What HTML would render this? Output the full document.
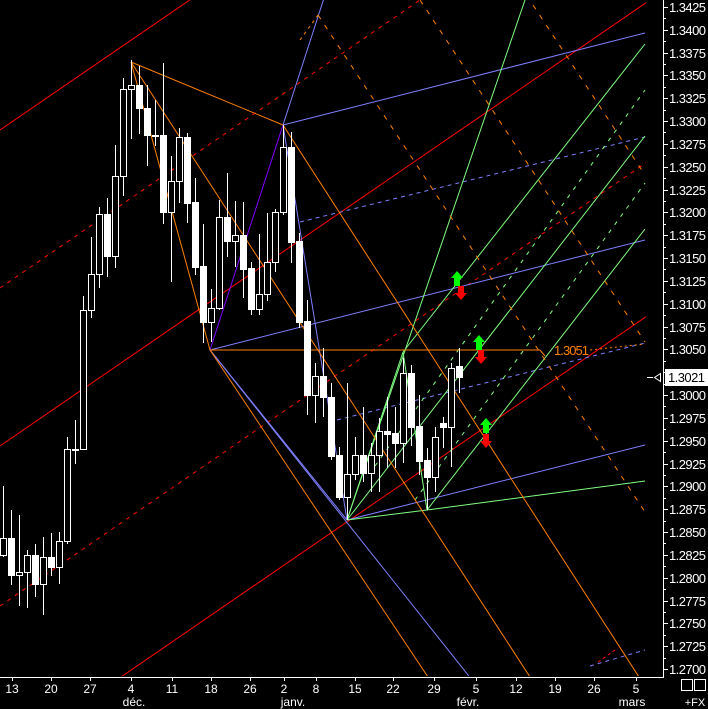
<!DOCTYPE html>
<html><head><meta charset="utf-8"><style>
html,body{margin:0;padding:0;background:#000;width:708px;height:709px;overflow:hidden}
svg{display:block;position:absolute;left:0;top:0}
text{font-family:"Liberation Sans",Arial,sans-serif;fill:#fff}
</style></head><body>
<svg width="708" height="709" viewBox="0 0 708 709" xmlns="http://www.w3.org/2000/svg">
<rect width="708" height="709" fill="#000"/>
<defs><clipPath id="c"><rect x="0" y="0" width="646" height="676"/></clipPath></defs>
<g clip-path="url(#c)" fill="none" stroke-width="1">
<line x1="0" y1="130" x2="197" y2="-5" stroke="#ff0000"/>
<line x1="0" y1="446" x2="650" y2="0" stroke="#ff0000"/>
<line x1="0" y1="760" x2="650" y2="314" stroke="#ff0000"/>
<line x1="0" y1="288" x2="420" y2="0" stroke="#ff0000" stroke-dasharray="4,5"/>
<line x1="0" y1="606" x2="650" y2="160" stroke="#ff0000" stroke-dasharray="4,5"/>
<line x1="598" y1="662" x2="618" y2="648" stroke="#ff0000" stroke-dasharray="3,3"/>
<line x1="210" y1="350" x2="645" y2="240" stroke="#8080ff"/>
<line x1="283" y1="125" x2="645" y2="33" stroke="#8080ff"/>
<line x1="347" y1="520" x2="645" y2="445" stroke="#8080ff"/>
<line x1="300" y1="222" x2="645" y2="137" stroke="#8080ff" stroke-dasharray="4,4"/>
<line x1="337" y1="420" x2="645" y2="343" stroke="#8080ff" stroke-dasharray="4,4"/>
<line x1="590" y1="666" x2="645" y2="650" stroke="#8080ff" stroke-dasharray="4,4"/>
<line x1="283" y1="125" x2="325" y2="-5" stroke="#8080ff"/>
<line x1="210" y1="350" x2="472" y2="680" stroke="#8080ff"/>
<line x1="283" y1="125" x2="347" y2="520" stroke="#8080ff"/>
<line x1="210" y1="350" x2="347" y2="520" stroke="#8080ff"/>
<line x1="210" y1="350" x2="283" y2="125" stroke="#8000ff"/>
<line x1="347" y1="520" x2="525" y2="0" stroke="#80ff80"/>
<line x1="347" y1="520" x2="645" y2="136" stroke="#80ff80"/>
<line x1="427" y1="510" x2="645" y2="229" stroke="#80ff80"/>
<line x1="403" y1="352" x2="645" y2="44" stroke="#80ff80"/>
<line x1="347" y1="520" x2="403" y2="352" stroke="#80ff80"/>
<line x1="427" y1="510" x2="403" y2="352" stroke="#80ff80"/>
<line x1="375" y1="466" x2="645" y2="90" stroke="#80ff80" stroke-dasharray="4,6"/>
<line x1="415" y1="500" x2="645" y2="183" stroke="#80ff80" stroke-dasharray="4,6"/>
<line x1="347" y1="520" x2="427" y2="510" stroke="#80ff80"/>
<line x1="427" y1="510" x2="645" y2="481" stroke="#80ff80"/>
<line x1="131" y1="62" x2="283" y2="125" stroke="#ff8000"/>
<line x1="131" y1="62" x2="210" y2="350" stroke="#ff8000"/>
<line x1="131" y1="62" x2="530" y2="677" stroke="#ff8000"/>
<line x1="283" y1="125" x2="639" y2="677" stroke="#ff8000"/>
<line x1="210" y1="350" x2="428" y2="677" stroke="#ff8000"/>
<line x1="210" y1="350" x2="540" y2="350" stroke="#ff8000"/>
<line x1="540" y1="350" x2="545" y2="356" stroke="#ff8000"/>
<line x1="590" y1="350" x2="645" y2="344" stroke="#ff8000" stroke-dasharray="2,3"/>
<line x1="318" y1="15" x2="645" y2="512" stroke="#ff8000" stroke-dasharray="5,7"/>
<line x1="420" y1="0" x2="645" y2="342" stroke="#ff8000" stroke-dasharray="5,7"/>
<line x1="533" y1="5" x2="645" y2="175" stroke="#ff8000" stroke-dasharray="5,7"/>
<line x1="300" y1="40" x2="318" y2="15" stroke="#ff8000" stroke-dasharray="3,4"/>
</g>
<text x="554" y="355" font-size="13" style="fill:#ff8000" textLength="35">1.3051</text>
<g stroke="#fff" stroke-width="1" shape-rendering="crispEdges">
<line x1="3.5" y1="486" x2="3.5" y2="557"/><rect x="0.5" y="538.5" width="6" height="17" fill="#000"/>
<line x1="11.5" y1="510" x2="11.5" y2="585"/><rect x="8.5" y="538.5" width="6" height="37" fill="#fff"/>
<line x1="19.5" y1="515" x2="19.5" y2="606"/><rect x="16.5" y="572.5" width="6" height="3" fill="#000"/>
<line x1="27.5" y1="550" x2="27.5" y2="608"/><rect x="24.5" y="555.5" width="6" height="17" fill="#000"/>
<line x1="35.5" y1="544" x2="35.5" y2="597"/><rect x="32.5" y="555.5" width="6" height="29" fill="#fff"/>
<line x1="43.5" y1="537" x2="43.5" y2="615"/><rect x="40.5" y="557.5" width="6" height="27" fill="#000"/>
<line x1="51.5" y1="533" x2="51.5" y2="576"/><rect x="48.5" y="557.5" width="6" height="10" fill="#fff"/>
<line x1="59.5" y1="532" x2="59.5" y2="584"/><rect x="56.5" y="541.5" width="6" height="26" fill="#000"/>
<line x1="67.5" y1="437" x2="67.5" y2="544"/><rect x="64.5" y="449.5" width="6" height="92" fill="#000"/>
<line x1="75.5" y1="420" x2="75.5" y2="464"/><rect x="72.5" y="449.5" width="6" height="1" fill="#fff"/>
<line x1="83.5" y1="296" x2="83.5" y2="450"/><rect x="80.5" y="310.5" width="6" height="139" fill="#000"/>
<line x1="91.5" y1="237" x2="91.5" y2="318"/><rect x="88.5" y="274.5" width="6" height="36" fill="#000"/>
<line x1="99.5" y1="207" x2="99.5" y2="288"/><rect x="96.5" y="214.5" width="6" height="60" fill="#000"/>
<line x1="107.5" y1="198" x2="107.5" y2="277"/><rect x="104.5" y="214.5" width="6" height="42" fill="#fff"/>
<line x1="115.5" y1="145" x2="115.5" y2="268"/><rect x="112.5" y="176.5" width="6" height="80" fill="#000"/>
<line x1="123.5" y1="78" x2="123.5" y2="196"/><rect x="120.5" y="89.5" width="6" height="87" fill="#000"/>
<line x1="131.5" y1="60" x2="131.5" y2="139"/><rect x="128.5" y="85.5" width="6" height="4" fill="#000"/>
<line x1="139.5" y1="66" x2="139.5" y2="134"/><rect x="136.5" y="85.5" width="6" height="23" fill="#fff"/>
<line x1="147.5" y1="85" x2="147.5" y2="166"/><rect x="144.5" y="108.5" width="6" height="27" fill="#fff"/>
<line x1="155.5" y1="100" x2="155.5" y2="146"/><rect x="152.5" y="135.5" width="6" height="1" fill="#fff"/>
<line x1="163.5" y1="63" x2="163.5" y2="224"/><rect x="160.5" y="135.5" width="6" height="77" fill="#fff"/>
<line x1="171.5" y1="156" x2="171.5" y2="282"/><rect x="168.5" y="181.5" width="6" height="31" fill="#000"/>
<line x1="179.5" y1="128" x2="179.5" y2="203"/><rect x="176.5" y="137.5" width="6" height="44" fill="#000"/>
<line x1="187.5" y1="133" x2="187.5" y2="223"/><rect x="184.5" y="137.5" width="6" height="66" fill="#fff"/>
<line x1="195.5" y1="178" x2="195.5" y2="275"/><rect x="192.5" y="202.5" width="6" height="65" fill="#fff"/>
<line x1="203.5" y1="224" x2="203.5" y2="343"/><rect x="200.5" y="266.5" width="6" height="56" fill="#fff"/>
<line x1="211.5" y1="289" x2="211.5" y2="342"/><rect x="208.5" y="308.5" width="6" height="14" fill="#000"/>
<line x1="219.5" y1="200" x2="219.5" y2="310"/><rect x="216.5" y="217.5" width="6" height="91" fill="#000"/>
<line x1="227.5" y1="173" x2="227.5" y2="257"/><rect x="224.5" y="217.5" width="6" height="24" fill="#fff"/>
<line x1="235.5" y1="201" x2="235.5" y2="267"/><rect x="232.5" y="235.5" width="6" height="6" fill="#000"/>
<line x1="243.5" y1="202" x2="243.5" y2="298"/><rect x="240.5" y="235.5" width="6" height="34" fill="#fff"/>
<line x1="251.5" y1="262" x2="251.5" y2="315"/><rect x="248.5" y="268.5" width="6" height="41" fill="#fff"/>
<line x1="259.5" y1="234" x2="259.5" y2="315"/><rect x="256.5" y="294.5" width="6" height="15" fill="#000"/>
<line x1="267.5" y1="213" x2="267.5" y2="301"/><rect x="264.5" y="262.5" width="6" height="32" fill="#000"/>
<line x1="275.5" y1="209" x2="275.5" y2="272"/><rect x="272.5" y="212.5" width="6" height="50" fill="#000"/>
<line x1="283.5" y1="125" x2="283.5" y2="215"/><rect x="280.5" y="147.5" width="6" height="65" fill="#000"/>
<line x1="291.5" y1="132" x2="291.5" y2="263"/><rect x="288.5" y="147.5" width="6" height="95" fill="#fff"/>
<line x1="299.5" y1="233" x2="299.5" y2="328"/><rect x="296.5" y="241.5" width="6" height="81" fill="#fff"/>
<line x1="307.5" y1="300" x2="307.5" y2="415"/><rect x="304.5" y="321.5" width="6" height="74" fill="#fff"/>
<line x1="315.5" y1="363" x2="315.5" y2="423"/><rect x="312.5" y="376.5" width="6" height="19" fill="#000"/>
<line x1="323.5" y1="348" x2="323.5" y2="417"/><rect x="320.5" y="376.5" width="6" height="21" fill="#fff"/>
<line x1="331.5" y1="383" x2="331.5" y2="460"/><rect x="328.5" y="397.5" width="6" height="59" fill="#fff"/>
<line x1="339.5" y1="447" x2="339.5" y2="500"/><rect x="336.5" y="455.5" width="6" height="42" fill="#fff"/>
<line x1="347.5" y1="383" x2="347.5" y2="520"/><rect x="344.5" y="474.5" width="6" height="23" fill="#000"/>
<line x1="355.5" y1="437" x2="355.5" y2="480"/><rect x="352.5" y="455.5" width="6" height="19" fill="#000"/>
<line x1="363.5" y1="407" x2="363.5" y2="482"/><rect x="360.5" y="455.5" width="6" height="18" fill="#fff"/>
<line x1="371.5" y1="443" x2="371.5" y2="492"/><rect x="368.5" y="455.5" width="6" height="18" fill="#000"/>
<line x1="379.5" y1="418" x2="379.5" y2="492"/><rect x="376.5" y="431.5" width="6" height="24" fill="#000"/>
<line x1="387.5" y1="397" x2="387.5" y2="468"/><rect x="384.5" y="431.5" width="6" height="3" fill="#fff"/>
<line x1="395.5" y1="407" x2="395.5" y2="468"/><rect x="392.5" y="433.5" width="6" height="10" fill="#fff"/>
<line x1="403.5" y1="358" x2="403.5" y2="463"/><rect x="400.5" y="373.5" width="6" height="70" fill="#000"/>
<line x1="411.5" y1="365" x2="411.5" y2="446"/><rect x="408.5" y="373.5" width="6" height="54" fill="#fff"/>
<line x1="419.5" y1="395" x2="419.5" y2="475"/><rect x="416.5" y="426.5" width="6" height="35" fill="#fff"/>
<line x1="427.5" y1="448" x2="427.5" y2="510"/><rect x="424.5" y="460.5" width="6" height="17" fill="#fff"/>
<line x1="435.5" y1="427" x2="435.5" y2="492"/><rect x="432.5" y="437.5" width="6" height="40" fill="#000"/>
<line x1="443.5" y1="417" x2="443.5" y2="448"/><rect x="440.5" y="423.5" width="6" height="4" fill="#fff"/>
<line x1="451.5" y1="363" x2="451.5" y2="467"/><rect x="448.5" y="368.5" width="6" height="59" fill="#000"/>
<line x1="459.5" y1="348" x2="459.5" y2="393"/><rect x="456.5" y="366.5" width="6" height="11" fill="#fff"/>
</g>
<g>
<path d="M457 271 L463 278 L460 278 L460 286 L454 286 L454 278 L451 278 Z" fill="#00ff00"/>
<path d="M461 300 L467 293 L464 293 L464 286 L458 286 L458 293 L455 293 Z" fill="#ff0000"/>
<path d="M479 335 L485 342 L482 342 L482 350 L476 350 L476 342 L473 342 Z" fill="#00ff00"/>
<path d="M481 364 L487 357 L484 357 L484 350 L478 350 L478 357 L475 357 Z" fill="#ff0000"/>
<path d="M486 418 L492 425 L489 425 L489 433 L483 433 L483 425 L480 425 Z" fill="#00ff00"/>
<path d="M486 448 L492 441 L489 441 L489 434 L483 434 L483 441 L480 441 Z" fill="#ff0000"/>
</g>
<g stroke="#fff" shape-rendering="crispEdges">
<line x1="663.5" y1="0" x2="663.5" y2="677"/>
<line x1="0" y1="677.5" x2="664" y2="677.5"/>
<line x1="663" y1="7.5" x2="668" y2="7.5"/><line x1="663" y1="18.5" x2="666" y2="18.5"/>
<line x1="663" y1="30.5" x2="668" y2="30.5"/><line x1="663" y1="41.5" x2="666" y2="41.5"/>
<line x1="663" y1="53.5" x2="668" y2="53.5"/><line x1="663" y1="64.5" x2="666" y2="64.5"/>
<line x1="663" y1="75.5" x2="668" y2="75.5"/><line x1="663" y1="87.5" x2="666" y2="87.5"/>
<line x1="663" y1="98.5" x2="668" y2="98.5"/><line x1="663" y1="110.5" x2="666" y2="110.5"/>
<line x1="663" y1="121.5" x2="668" y2="121.5"/><line x1="663" y1="132.5" x2="666" y2="132.5"/>
<line x1="663" y1="144.5" x2="668" y2="144.5"/><line x1="663" y1="155.5" x2="666" y2="155.5"/>
<line x1="663" y1="167.5" x2="668" y2="167.5"/><line x1="663" y1="178.5" x2="666" y2="178.5"/>
<line x1="663" y1="190.5" x2="668" y2="190.5"/><line x1="663" y1="201.5" x2="666" y2="201.5"/>
<line x1="663" y1="212.5" x2="668" y2="212.5"/><line x1="663" y1="224.5" x2="666" y2="224.5"/>
<line x1="663" y1="235.5" x2="668" y2="235.5"/><line x1="663" y1="247.5" x2="666" y2="247.5"/>
<line x1="663" y1="258.5" x2="668" y2="258.5"/><line x1="663" y1="269.5" x2="666" y2="269.5"/>
<line x1="663" y1="281.5" x2="668" y2="281.5"/><line x1="663" y1="292.5" x2="666" y2="292.5"/>
<line x1="663" y1="304.5" x2="668" y2="304.5"/><line x1="663" y1="315.5" x2="666" y2="315.5"/>
<line x1="663" y1="327.5" x2="668" y2="327.5"/><line x1="663" y1="338.5" x2="666" y2="338.5"/>
<line x1="663" y1="349.5" x2="668" y2="349.5"/><line x1="663" y1="361.5" x2="666" y2="361.5"/>
<line x1="663" y1="372.5" x2="668" y2="372.5"/><line x1="663" y1="384.5" x2="666" y2="384.5"/>
<line x1="663" y1="395.5" x2="668" y2="395.5"/><line x1="663" y1="406.5" x2="666" y2="406.5"/>
<line x1="663" y1="418.5" x2="668" y2="418.5"/><line x1="663" y1="429.5" x2="666" y2="429.5"/>
<line x1="663" y1="441.5" x2="668" y2="441.5"/><line x1="663" y1="452.5" x2="666" y2="452.5"/>
<line x1="663" y1="464.5" x2="668" y2="464.5"/><line x1="663" y1="475.5" x2="666" y2="475.5"/>
<line x1="663" y1="486.5" x2="668" y2="486.5"/><line x1="663" y1="498.5" x2="666" y2="498.5"/>
<line x1="663" y1="509.5" x2="668" y2="509.5"/><line x1="663" y1="521.5" x2="666" y2="521.5"/>
<line x1="663" y1="532.5" x2="668" y2="532.5"/><line x1="663" y1="543.5" x2="666" y2="543.5"/>
<line x1="663" y1="555.5" x2="668" y2="555.5"/><line x1="663" y1="566.5" x2="666" y2="566.5"/>
<line x1="663" y1="578.5" x2="668" y2="578.5"/><line x1="663" y1="589.5" x2="666" y2="589.5"/>
<line x1="663" y1="601.5" x2="668" y2="601.5"/><line x1="663" y1="612.5" x2="666" y2="612.5"/>
<line x1="663" y1="623.5" x2="668" y2="623.5"/><line x1="663" y1="635.5" x2="666" y2="635.5"/>
<line x1="663" y1="646.5" x2="668" y2="646.5"/><line x1="663" y1="658.5" x2="666" y2="658.5"/>
<line x1="663" y1="669.5" x2="668" y2="669.5"/>
<line x1="12.5" y1="677" x2="12.5" y2="681"/><line x1="51.5" y1="677" x2="51.5" y2="681"/><line x1="90.5" y1="677" x2="90.5" y2="681"/><line x1="131.5" y1="677" x2="131.5" y2="681"/><line x1="172.5" y1="677" x2="172.5" y2="681"/><line x1="211.5" y1="677" x2="211.5" y2="681"/><line x1="250.5" y1="677" x2="250.5" y2="681"/><line x1="284.5" y1="677" x2="284.5" y2="681"/><line x1="316.5" y1="677" x2="316.5" y2="681"/><line x1="355.5" y1="677" x2="355.5" y2="681"/><line x1="393.5" y1="677" x2="393.5" y2="681"/><line x1="434.5" y1="677" x2="434.5" y2="681"/><line x1="476.5" y1="677" x2="476.5" y2="681"/><line x1="516.5" y1="677" x2="516.5" y2="681"/><line x1="555.5" y1="677" x2="555.5" y2="681"/><line x1="594.5" y1="677" x2="594.5" y2="681"/><line x1="636.5" y1="677" x2="636.5" y2="681"/>
<rect x="681.5" y="679.5" width="11" height="11" fill="none"/>
<rect x="694.5" y="679.5" width="11" height="11" fill="none"/>
</g>
<g font-size="13">
<text x="669" y="12" textLength="37">1.3425</text>
<text x="669" y="35" textLength="37">1.3400</text>
<text x="669" y="58" textLength="37">1.3375</text>
<text x="669" y="80" textLength="37">1.3350</text>
<text x="669" y="103" textLength="37">1.3325</text>
<text x="669" y="126" textLength="37">1.3300</text>
<text x="669" y="149" textLength="37">1.3275</text>
<text x="669" y="172" textLength="37">1.3250</text>
<text x="669" y="195" textLength="37">1.3225</text>
<text x="669" y="217" textLength="37">1.3200</text>
<text x="669" y="240" textLength="37">1.3175</text>
<text x="669" y="263" textLength="37">1.3150</text>
<text x="669" y="286" textLength="37">1.3125</text>
<text x="669" y="309" textLength="37">1.3100</text>
<text x="669" y="332" textLength="37">1.3075</text>
<text x="669" y="354" textLength="37">1.3050</text>
<text x="669" y="400" textLength="37">1.3000</text>
<text x="669" y="423" textLength="37">1.2975</text>
<text x="669" y="446" textLength="37">1.2950</text>
<text x="669" y="469" textLength="37">1.2925</text>
<text x="669" y="491" textLength="37">1.2900</text>
<text x="669" y="514" textLength="37">1.2875</text>
<text x="669" y="537" textLength="37">1.2850</text>
<text x="669" y="560" textLength="37">1.2825</text>
<text x="669" y="583" textLength="37">1.2800</text>
<text x="669" y="606" textLength="37">1.2775</text>
<text x="669" y="628" textLength="37">1.2750</text>
<text x="669" y="651" textLength="37">1.2725</text>
<text x="669" y="674" textLength="37">1.2700</text>
</g>
<rect x="665" y="369" width="43" height="17" fill="#fff"/>
<text x="668" y="382" font-size="13" textLength="37" style="fill:#000">1.3021</text>
<g stroke="#fff" fill="none"><line x1="647" y1="377.5" x2="653" y2="377.5"/><path d="M660.5 373.5 L654.5 377.5 L660.5 381.5 Z"/></g>
<g font-size="12" text-anchor="middle">
<text x="12" y="693">13</text><text x="51" y="693">20</text><text x="90" y="693">27</text><text x="131" y="693">4</text><text x="172" y="693">11</text><text x="211" y="693">18</text><text x="250" y="693">26</text><text x="284" y="693">2</text><text x="316" y="693">8</text><text x="355" y="693">15</text><text x="393" y="693">22</text><text x="434" y="693">29</text><text x="476" y="693">5</text><text x="516" y="693">12</text><text x="555" y="693">19</text><text x="594" y="693">26</text><text x="636" y="693">5</text>
<text x="134" y="706">déc.</text><text x="293" y="706">janv.</text><text x="468" y="706">févr.</text><text x="632" y="706">mars</text>
<text x="695" y="706" font-size="11">+FX</text>
</g>
</svg>
</body></html>
